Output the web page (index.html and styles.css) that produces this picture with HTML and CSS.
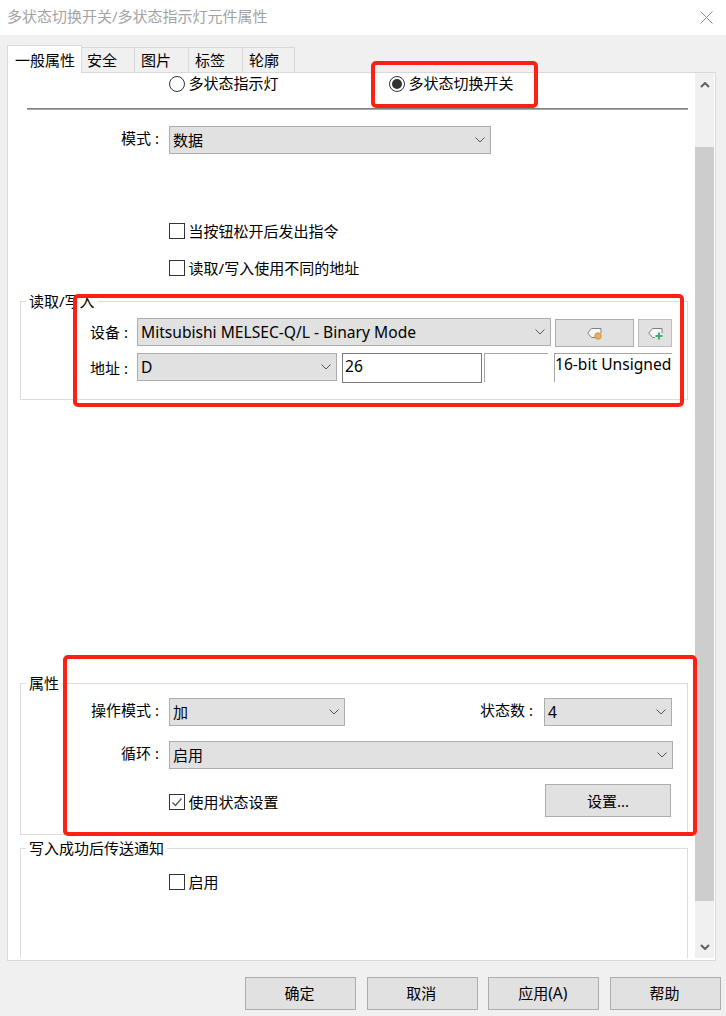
FILE: index.html
```html
<!DOCTYPE html>
<html lang="zh">
<head>
<meta charset="utf-8">
<title>多状态切换开关/多状态指示灯元件属性</title>
<link rel="stylesheet" href="styles.css">
</head>
<body>
<div class="window">
  <header class="titlebar">
    <span class="title">多状态切换开关/多状态指示灯元件属性</span>
    <svg class="close" width="13" height="13" viewBox="0 0 13 13"><path d="M.5.5l12 12M12.500.5l-12 12" fill="none" stroke="#8a8a8a"/></svg>
  </header>
  <div class="body">
    <nav class="tabs">
      <span class="tab tab-active">一般属性</span>
      <span class="tab tab-1">安全</span>
      <span class="tab tab-2">图片</span>
      <span class="tab tab-3">标签</span>
      <span class="tab tab-4">轮廓</span>
    </nav>
    <section class="panel">
      <div class="viewport">
        <div class="radios">
          <span class="choice choice-first"><i class="radio"></i><span class="choice-text">多状态指示灯</span></span>
          <span class="choice"><i class="radio radio-on"></i><span class="choice-text">多状态切换开关</span></span>
        </div>
        <div class="separator"></div>
        <div class="row mode-row">
          <span class="label label-wide">模式 :</span>
          <div class="select select-mode"><span>数据</span><svg class="chev" width="10" height="6" viewBox="0 0 10 6"><path d="M.5.5L5 5 9.500.5" fill="none" stroke="#555"/></svg></div>
        </div>
        <label class="check check-a"><i class="box"></i>当按钮松开后发出指令</label>
        <label class="check check-b"><i class="box"></i>读取/写入使用不同的地址</label>

        <div class="group group-rw">
          <div class="legend">读取/写入</div>
          <div class="row">
            <span class="label label-narrow">设备 :</span>
            <div class="select select-device"><span class="latin">Mitsubishi MELSEC-Q/L - Binary Mode</span><svg class="chev" width="10" height="6" viewBox="0 0 10 6"><path d="M.5.5L5 5 9.500.5" fill="none" stroke="#555"/></svg></div>
            <div class="btn btn-tag">
              <svg width="15" height="13" viewBox="0 0 15 13"><path d="M4.500 1.500H14.500V10.500H4.500L.7 6z" fill="#f6f6f6"/><path d="M14 6.500V1.500H4.500L.7 6l3.800 4.500H8" fill="none" stroke="#808080"/><circle cx="11" cy="9" r="3.200" fill="#e2b060" stroke="#d4913a"/></svg>
            </div>
            <div class="btn btn-tag-add">
              <svg width="15" height="13" viewBox="0 0 15 13"><path d="M4.500 1.500H14.500V10.500H4.500L.7 6z" fill="#f6f6f6"/><path d="M14 6.500V1.500H4.500L.7 6l3.800 4.500H7" fill="none" stroke="#808080"/><path d="M11 5.500v7M7.500 9h7" fill="none" stroke="#3cae6e" stroke-width="2"/></svg>
            </div>
          </div>
          <div class="row row-address">
            <span class="label label-narrow label-addr">地址 :</span>
            <div class="select select-addr"><span class="latin">D</span><svg class="chev" width="10" height="6" viewBox="0 0 10 6"><path d="M.5.5L5 5 9.500.5" fill="none" stroke="#555"/></svg></div>
            <div class="input latin">26</div>
            <div class="field field-blank"></div>
            <div class="field field-type latin">16-bit Unsigned</div>
          </div>
        </div>

        <div class="group group-attr">
          <div class="legend">属性</div>
          <div class="row">
            <span class="label label-inner">操作模式 :</span>
            <div class="select select-op"><span>加</span><svg class="chev" width="10" height="6" viewBox="0 0 10 6"><path d="M.5.5L5 5 9.500.5" fill="none" stroke="#555"/></svg></div>
            <span class="label-states">状态数 :</span>
            <div class="select select-states"><span class="latin">4</span><svg class="chev" width="10" height="6" viewBox="0 0 10 6"><path d="M.5.5L5 5 9.500.5" fill="none" stroke="#555"/></svg></div>
          </div>
          <div class="row row-loop">
            <span class="label label-inner">循环 :</span>
            <div class="select select-loop"><span>启用</span><svg class="chev" width="10" height="6" viewBox="0 0 10 6"><path d="M.5.5L5 5 9.500.5" fill="none" stroke="#555"/></svg></div>
          </div>
          <div class="row row-state">
            <label class="check-inline"><i class="box"><svg width="14" height="14" viewBox="0 0 14 14"><path d="M2.500 7.500l3 3 6-7" fill="none" stroke="#555" stroke-width="1.300"/></svg></i>使用状态设置</label>
            <div class="btn btn-set">设置...</div>
          </div>
        </div>

        <div class="group group-notify">
          <div class="legend">写入成功后传送通知</div>
          <label class="check check-enable"><i class="box"></i>启用</label>
        </div>
      </div>
      <aside class="scrollbar">
        <svg class="arrow" width="10" height="6" viewBox="0 0 10 6"><path d="M1 5l4-4 4 4" fill="none" stroke="#606060" stroke-width="2"/></svg>
        <div class="thumb"></div>
        <svg class="arrow" width="10" height="6" viewBox="0 0 10 6"><path d="M1 1l4 4 4-4" fill="none" stroke="#606060" stroke-width="2"/></svg>
      </aside>
    </section>
    <footer class="actions">
      <div class="btn btn-foot">确定</div>
      <div class="btn btn-foot">取消</div>
      <div class="btn btn-foot">应用<span class="latin">(A)</span></div>
      <div class="btn btn-foot">帮助</div>
    </footer>
  </div>
  <div class="mark mark-1"></div>
  <div class="mark mark-2"></div>
  <div class="mark mark-3"></div>
</div>
</body>
</html>
```
FILE: styles.css
```css
* { box-sizing: border-box; }
html, body { margin: 0; padding: 0; }
body {
  width: 726px;
  height: 1016px;
  overflow: hidden;
  background: #f0f0f0;
  color: #000;
  font: 15px/20px "Noto Sans", "Noto Sans CJK SC", sans-serif;
}
.latin { font-size: 15.6px; }
.window { position: relative; width: 726px; height: 1016px; display: flex; flex-direction: column; }

.titlebar {
  height: 35px;
  background: #fff;
  display: flex;
  align-items: center;
  justify-content: space-between;
  padding: 0 13px 3px 7px;
}
.title { color: #a3a3a3; }
.close { display: block; margin-top: 3px; }

.body { flex: 1; display: flex; flex-direction: column; padding: 10px 5px 6px 7px; }

.tabs { display: flex; align-items: flex-end; height: 27px; position: relative; z-index: 1; }
.tab {
  height: 25px;
  line-height: 25px;
  border: 1px solid #d9d9d9;
  border-left: 0;
  border-bottom: 0;
  padding-left: 5px;
}
.tab-active {
  height: 28px;
  line-height: 28px;
  width: 75px;
  margin-bottom: -1px;
  background: #fff;
  border-left: 1px solid #d9d9d9;
  padding-left: 7px;
}
.tab-1 { width: 53px; }
.tab-2 { width: 54px; padding-left: 6px; }
.tab-3 { width: 54px; padding-left: 6px; }
.tab-4 { width: 52px; padding-left: 6px; }

.panel {
  height: 889px;
  width: 709px;
  background: #fff;
  border: 1px solid #d9d9d9;
  display: flex;
  padding-bottom: 2px;
}
.viewport { width: 687px; overflow: hidden; }

.scrollbar {
  width: 19px;
  background: #f0f0f0;
  display: flex;
  flex-direction: column;
  align-items: center;
}
.arrow { display: block; flex: none; }
.scrollbar .arrow:first-child { margin-top: 9px; }
.scrollbar .arrow:last-child { margin-top: 43px; }
.thumb { align-self: stretch; height: 754px; margin-top: 59px; background: #cdcdcd; flex: none; }

.radios { display: flex; height: 20px; margin-top: 1px; padding-left: 161px; }
.choice { display: flex; align-items: center; gap: 3.6px; }
.choice-first { width: 220px; }
.choice-text { margin-top: -2px; }
.radio {
  width: 16px;
  height: 16px;
  border: 1px solid #333;
  border-radius: 50%;
  background: #fff;
  position: relative;
  flex: none;
}
.radio-on::after {
  content: "";
  position: absolute;
  left: 2px;
  top: 2px;
  width: 10px;
  height: 10px;
  border-radius: 50%;
  background: #333;
}
.separator { height: 2px; margin: 14px 7px 0 19px; background: #808080; border-bottom: 1px solid #a8a8a8; }

.row { display: flex; align-items: flex-start; height: 28px; }
.mode-row { margin-top: 16px; }
.label { text-align: right; line-height: 24px; flex: none; }
.label-wide { width: 151px; margin-right: 10px; }
.label-narrow { width: 107px; margin-right: 9px; line-height: 28px; }
.label-addr { line-height: 30px; }
.label-inner { width: 138px; margin-right: 10px; }

.select {
  height: 28px;
  background: #e1e1e1;
  border: 1px solid #adadad;
  display: flex;
  align-items: center;
  justify-content: space-between;
  padding: 0 5px 0 3px;
  flex: none;
}
.select-mode { width: 322px; }
.select-device { width: 414px; }
.select-addr { width: 200px; }
.select-op { width: 176px; }
.select-states { width: 128px; }
.select-loop { width: 504px; }
.chev { display: block; flex: none; }

.btn {
  background: #e1e1e1;
  border: 1px solid #adadad;
  display: flex;
  align-items: center;
  justify-content: center;
  flex: none;
}
.btn-tag { width: 79px; height: 28px; margin: 1px 0 0 4px; }
.btn-tag-add { width: 34px; height: 28px; margin: 1px 0 0 4px; border-color: #bdbdbd; }
.btn-set { width: 126px; height: 33px; margin-left: auto; margin-right: 16px; }
.btn-foot { width: 111px; height: 33px; padding: 0 2px 2px 0; }

.check, .check-inline { display: flex; align-items: center; gap: 3.6px; height: 16px; line-height: 16px; }
.check-a { margin: 69px 0 0 161px; }
.check-b { margin: 21px 0 0 161px; }
.box {
  width: 16px;
  height: 16px;
  border: 1px solid #333;
  background: #fff;
  flex: none;
  display: flex;
  align-items: center;
  justify-content: center;
}

.group { border: 1px solid #dcdcdc; margin: 0 7px 0 12px; }
.legend {
  width: fit-content;
  height: 20px;
  margin: -11px 0 0 5px;
  padding: 0 3px;
  background: #fff;
}
.group-rw { height: 99px; margin-top: 25px; }
.group-rw > .legend { margin-bottom: 7px; }
.row-address { margin-top: 7px; height: 30px; }
.input {
  width: 140px;
  height: 30px;
  margin-left: 5px;
  border: 1px solid #7a7a7a;
  padding-left: 2px;
  line-height: 24px;
}
.field { height: 29px; border-top: 1px solid #a6a6a6; border-left: 1px solid #a6a6a6; flex: none; }
.field-blank { width: 64px; margin-left: 2px; }
.field-type { width: 118px; margin-left: 6px; line-height: 21px; white-space: nowrap; }

.group-attr { height: 152px; margin-top: 283px; }
.group-attr > .legend { margin-bottom: 5px; }
.label-states { margin-left: auto; margin-right: 11px; line-height: 24px; }
.select-states { margin-right: 15px; }
.row-loop { margin-top: 15px; }
.row-state { margin-top: 15px; height: 33px; align-items: center; }
.check-inline { margin: 3px 0 0 148px; }

.group-notify { height: 130px; margin-top: 13px; }
.check-enable { margin: 16px 0 0 148px; }

.actions { display: flex; justify-content: flex-end; gap: 10.67px; margin-top: 16px; }

.mark { position: absolute; border: 4px solid #ff2015; border-radius: 5px; pointer-events: none; }
.mark-1 { left: 371px; top: 61px; width: 167px; height: 47px; }
.mark-2 { left: 73px; top: 294px; width: 611px; height: 113px; }
.mark-3 { left: 63px; top: 655px; width: 634px; height: 181px; }
```
